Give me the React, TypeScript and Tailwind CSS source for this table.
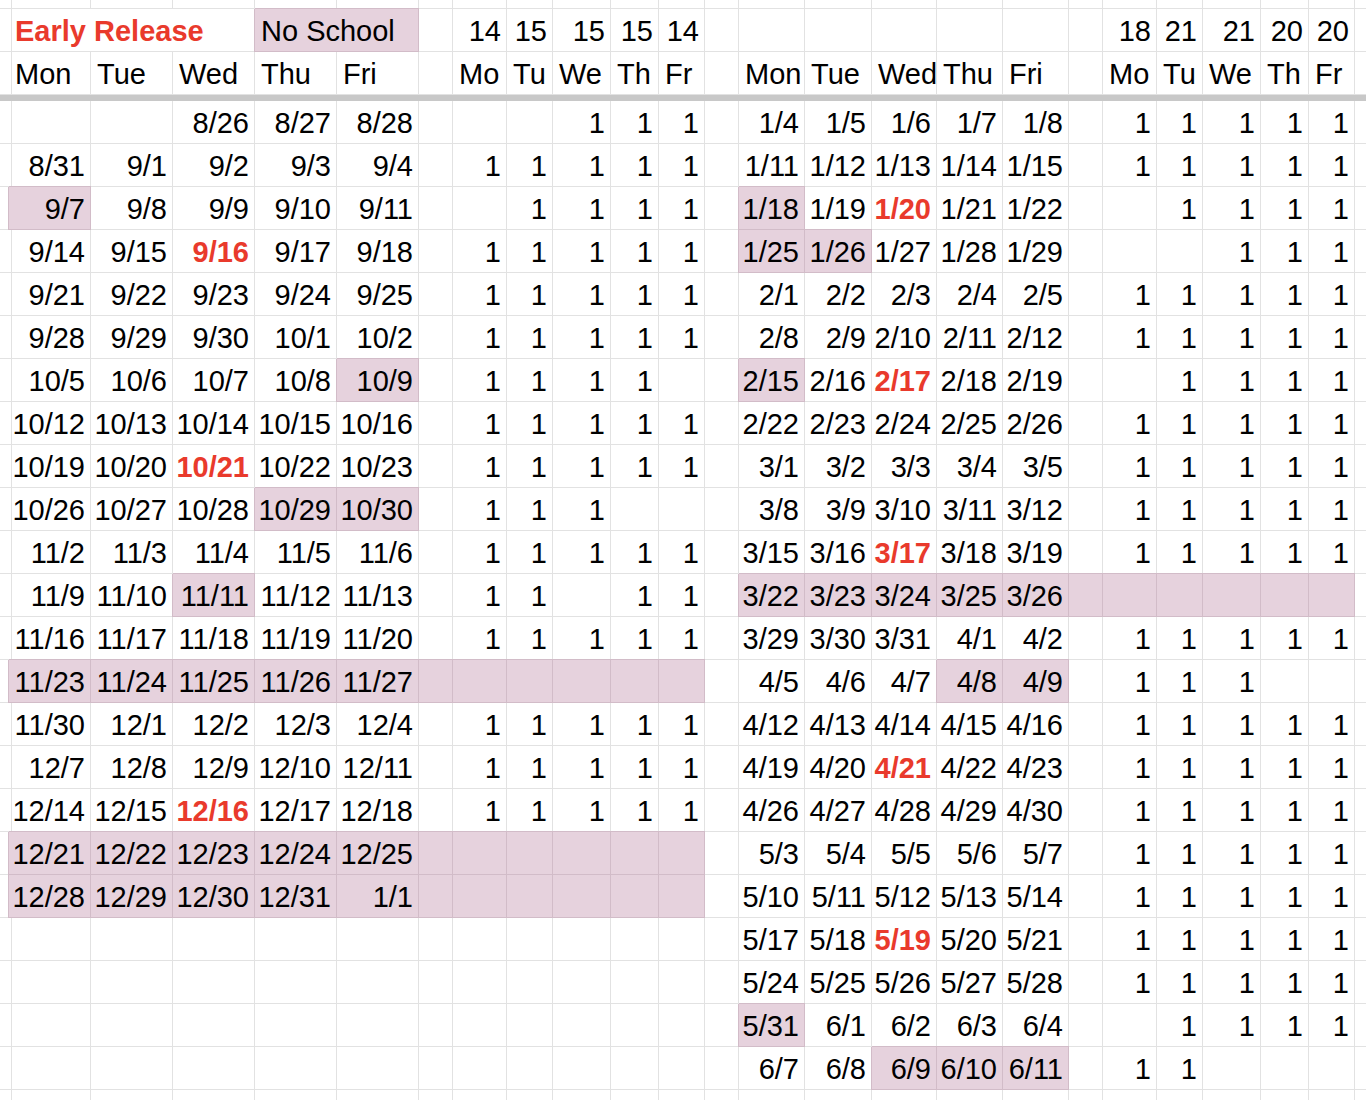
import React from "react"

type Spec = {
  t?: string
  right?: boolean
  shaded?: boolean
  red?: boolean
  span?: 2 | 3
}

const GRID_COLS =
  "grid-cols-[9px_82px_82px_82px_82px_82px_34px_54px_46px_58px_48px_46px_34px_66px_67px_65px_66px_66px_34px_54px_46px_58px_48px_46px_1fr]"

// "9/7*" = no school (shaded), "9/16!" = early release (red)
function parseDate(raw: string, all: boolean): Spec {
  let t = raw
  let shaded = all
  let red = false
  if (t.endsWith("*")) {
    shaded = true
    t = t.slice(0, -1)
  }
  if (t.endsWith("!")) {
    red = true
    t = t.slice(0, -1)
  }
  return { t, right: true, shaded, red }
}

function ones(mask: string, all: boolean): Spec[] {
  return mask.split("").map((c) => ({ t: c === "1" ? "1" : "", right: true, shaded: all }))
}

function dataRow(
  left: string[],
  lo: string,
  right: string[],
  ro: string,
  leftAll = false,
  rightAll = false
): Spec[] {
  return [
    {},
    ...left.map((d) => parseDate(d, leftAll)),
    { shaded: leftAll },
    ...ones(lo, leftAll),
    {},
    ...right.map((d) => parseDate(d, rightAll)),
    { shaded: rightAll },
    ...ones(ro, rightAll),
    {},
  ]
}

const E5 = ["", "", "", "", ""]

const rows: Spec[][] = [
  dataRow(["", "", "8/26", "8/27", "8/28"], "..111", ["1/4", "1/5", "1/6", "1/7", "1/8"], "11111"),
  dataRow(["8/31", "9/1", "9/2", "9/3", "9/4"], "11111", ["1/11", "1/12", "1/13", "1/14", "1/15"], "11111"),
  dataRow(["9/7*", "9/8", "9/9", "9/10", "9/11"], ".1111", ["1/18*", "1/19", "1/20!", "1/21", "1/22"], ".1111"),
  dataRow(["9/14", "9/15", "9/16!", "9/17", "9/18"], "11111", ["1/25*", "1/26*", "1/27", "1/28", "1/29"], "..111"),
  dataRow(["9/21", "9/22", "9/23", "9/24", "9/25"], "11111", ["2/1", "2/2", "2/3", "2/4", "2/5"], "11111"),
  dataRow(["9/28", "9/29", "9/30", "10/1", "10/2"], "11111", ["2/8", "2/9", "2/10", "2/11", "2/12"], "11111"),
  dataRow(["10/5", "10/6", "10/7", "10/8", "10/9*"], "1111.", ["2/15*", "2/16", "2/17!", "2/18", "2/19"], ".1111"),
  dataRow(["10/12", "10/13", "10/14", "10/15", "10/16"], "11111", ["2/22", "2/23", "2/24", "2/25", "2/26"], "11111"),
  dataRow(["10/19", "10/20", "10/21!", "10/22", "10/23"], "11111", ["3/1", "3/2", "3/3", "3/4", "3/5"], "11111"),
  dataRow(["10/26", "10/27", "10/28", "10/29*", "10/30*"], "111..", ["3/8", "3/9", "3/10", "3/11", "3/12"], "11111"),
  dataRow(["11/2", "11/3", "11/4", "11/5", "11/6"], "11111", ["3/15", "3/16", "3/17!", "3/18", "3/19"], "11111"),
  dataRow(["11/9", "11/10", "11/11*", "11/12", "11/13"], "11.11", ["3/22", "3/23", "3/24", "3/25", "3/26"], ".....", false, true),
  dataRow(["11/16", "11/17", "11/18", "11/19", "11/20"], "11111", ["3/29", "3/30", "3/31", "4/1", "4/2"], "11111"),
  dataRow(["11/23", "11/24", "11/25", "11/26", "11/27"], ".....", ["4/5", "4/6", "4/7", "4/8*", "4/9*"], "111..", true),
  dataRow(["11/30", "12/1", "12/2", "12/3", "12/4"], "11111", ["4/12", "4/13", "4/14", "4/15", "4/16"], "11111"),
  dataRow(["12/7", "12/8", "12/9", "12/10", "12/11"], "11111", ["4/19", "4/20", "4/21!", "4/22", "4/23"], "11111"),
  dataRow(["12/14", "12/15", "12/16!", "12/17", "12/18"], "11111", ["4/26", "4/27", "4/28", "4/29", "4/30"], "11111"),
  dataRow(["12/21", "12/22", "12/23", "12/24", "12/25"], ".....", ["5/3", "5/4", "5/5", "5/6", "5/7"], "11111", true),
  dataRow(["12/28", "12/29", "12/30", "12/31", "1/1"], ".....", ["5/10", "5/11", "5/12", "5/13", "5/14"], "11111", true),
  dataRow(E5, ".....", ["5/17", "5/18", "5/19!", "5/20", "5/21"], "11111"),
  dataRow(E5, ".....", ["5/24", "5/25", "5/26", "5/27", "5/28"], "11111"),
  dataRow(E5, ".....", ["5/31*", "6/1", "6/2", "6/3", "6/4"], ".1111"),
  dataRow(E5, ".....", ["6/7", "6/8", "6/9*", "6/10*", "6/11*"], "11..."),
  dataRow(E5, ".....", E5, "....."),
]

const blank = (n: number): Spec[] => Array.from({ length: n }, () => ({}))

const topRow: Spec[] = [
  {},
  { t: "Early Release", red: true, span: 3 },
  { t: "No School", shaded: true, span: 2 },
  {},
  ...["14", "15", "15", "15", "14"].map((t) => ({ t, right: true })),
  {},
  ...blank(5),
  {},
  ...["18", "21", "21", "20", "20"].map((t) => ({ t, right: true })),
  {},
]

const dayRow: Spec[] = [
  {},
  ...["Mon", "Tue", "Wed", "Thu", "Fri"].map((t) => ({ t })),
  {},
  ...["Mo", "Tu", "We", "Th", "Fr"].map((t) => ({ t })),
  {},
  ...["Mon", "Tue", "Wed", "Thu", "Fri"].map((t) => ({ t })),
  {},
  ...["Mo", "Tu", "We", "Th", "Fr"].map((t) => ({ t })),
  {},
]

function Cell({ spec, short }: { spec: Spec; short?: boolean }) {
  return (
    <div
      className={[
        "flex items-end whitespace-nowrap border-r border-b pl-[6px] pr-[5px]",
        short ? "h-[9px]" : "h-[43px] pb-1",
        spec.right ? "justify-end" : "justify-start",
        spec.span === 3 ? "col-span-3" : spec.span === 2 ? "col-span-2" : "",
        spec.shaded
          ? "bg-[#e6d2dd] border-[#d2bcc8] shadow-[0_-1px_0_0_#d2bcc8,-1px_0_0_0_#d2bcc8]"
          : "border-[#e2e2e2]",
      ].join(" ")}
    >
      {spec.t ? (
        <span className={spec.red ? "leading-[32px] font-bold text-[#e93a2c]" : "leading-[32px]"}>
          {spec.t}
        </span>
      ) : null}
    </div>
  )
}

export default function App() {
  return (
    <div className="h-[1100px] w-full overflow-hidden bg-white font-['Liberation_Sans',Arial,sans-serif] text-[29px] text-black">
      <div className={`grid ${GRID_COLS}`}>
        {blank(25).map((s, i) => (
          <Cell key={`z${i}`} spec={s} short />
        ))}
        {topRow.map((s, i) => (
          <Cell key={`a${i}`} spec={s} />
        ))}
        {dayRow.map((s, i) => (
          <Cell key={`b${i}`} spec={s} />
        ))}
        {/* frozen-rows divider */}
        <div className="col-span-full h-[6px] bg-[#c8c8c8]" />
        {rows.map((r, ri) =>
          r.map((s, ci) => <Cell key={`r${ri}-${ci}`} spec={s} />)
        )}
      </div>
    </div>
  )
}
